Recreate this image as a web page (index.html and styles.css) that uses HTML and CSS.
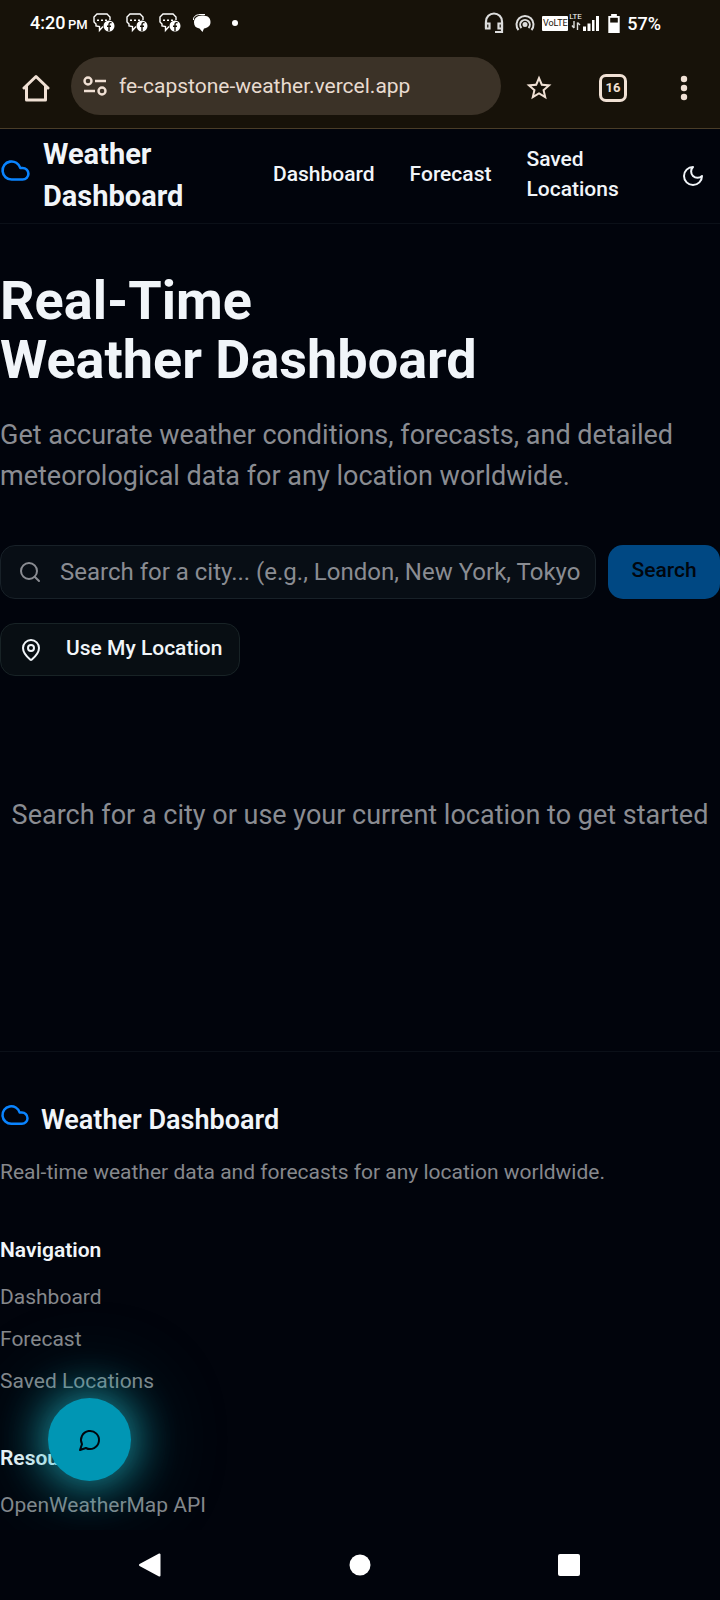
FILE: index.html
```html
<!DOCTYPE html>
<html lang="en">
<head>
<meta charset="utf-8">
<meta name="viewport" content="width=device-width, initial-scale=1">
<title>Weather Dashboard</title>
<link rel="stylesheet" href="styles.css">
</head>
<body>
<div class="browser">
  <div class="status">
    <span class="clock">4:20 <small>PM</small></span>
    <div class="notices">
      <svg class="notice" viewBox="0 0 22 20"><use href="#chat-notice"/></svg>
      <svg class="notice" viewBox="0 0 22 20"><use href="#chat-notice"/></svg>
      <svg class="notice" viewBox="0 0 22 20"><use href="#chat-notice"/></svg>
      <svg class="bubble" viewBox="0 0 20 20"><path d="M1.500 7C1 4 4 1.500 8 1.500h5" fill="none" stroke="#fff" stroke-width="1"/><path d="M10 2.500c5.500 0 8.500 2 8.500 6.500 0 4-3 6-6.500 6.500l-1.500 3.500-3-3.500C4 15 2 13 2 9.500c0-4 3-7 8-7z" fill="#fff"/></svg>
      <span class="dot"></span>
    </div>
    <div class="system">
      <svg class="headset" viewBox="0 0 20 22" fill="none" stroke="#ddd" stroke-width="2.200"><path d="M2 16V9.500a8 8 0 0 1 16 0V20h-7"/><path d="M2 11.500h3.500v5H2zM14.500 11.500H18v5h-3.500z"/></svg>
      <svg class="hotspot" viewBox="0 0 20 18" fill="none" stroke="#ddd" stroke-width="2"><path d="M3.500 16a8.500 8.500 0 1 1 13 0"/><path d="M6.500 14a4.800 4.800 0 1 1 7 0"/><circle cx="10" cy="10.500" r="1.500" fill="#ddd"/></svg>
      <span class="volte">VoLTE</span>
      <div class="signal">
        <span class="lte">LTE</span>
        <svg viewBox="0 0 30 16"><path d="M5 6v7M3 10.500l2 2.500M8.500 15V7.500M8.500 7.500l2.500 2.500" stroke="#ddd" fill="none" stroke-width="1.400"/><path d="M14 11.500h3V16h-3zM18.500 8.500h3V16h-3zM23 5h2.500v11H23zM27 1h3v15h-3z" fill="#fff"/></svg>
      </div>
      <svg class="battery" viewBox="0 0 12 20"><path d="M3 0h6v2h3v18H0V2h3z" fill="#fff"/><path d="M2 4h8v5H2z" fill="#171209"/></svg>
      <span class="percent">57%</span>
    </div>
  </div>
  <div class="toolbar">
    <button class="tool home" aria-label="Home"><svg viewBox="0 0 28 28" fill="none" stroke="#f0e0d4" stroke-width="3" stroke-linejoin="round" stroke-linecap="round"><path d="M2 14 14 2.500 26 14M4.500 12v14h19V12"/></svg></button>
    <label class="address">
      <svg viewBox="0 0 24 20" fill="none" stroke="#f0e0d4" stroke-width="2.400"><circle cx="5" cy="5" r="3.500"/><path d="M12 5h11M1 15h11"/><circle cx="19" cy="15" r="3.500"/></svg>
      <input type="text" aria-label="Address" value="fe-capstone-weather.vercel.app">
    </label>
    <button class="tool star" aria-label="Bookmark"><svg viewBox="0 0 24 24"><path fill="#f0e0d4" d="M22 9.240l-7.190-.620L12 2 9.190 8.630 2 9.240l5.460 4.730L5.820 21 12 17.270 18.180 21l-1.630-7.030L22 9.240zM12 15.400l-3.760 2.270 1-4.280-3.320-2.880 4.380-.380L12 6.100l1.710 4.040 4.380.380-3.320 2.880 1 4.280L12 15.400z"/></svg></button>
    <button class="tool" aria-label="Open tabs"><span class="tabs">16</span></button>
    <button class="tool more" aria-label="Menu"><svg viewBox="0 0 8 26" fill="#f0e0d4"><circle cx="4" cy="4" r="3.200"/><circle cx="4" cy="13" r="3.200"/><circle cx="4" cy="22" r="3.200"/></svg></button>
  </div>
</div>

<div class="page">
  <header class="header">
    <a class="brand" href="#"><svg class="cloud" viewBox="0 0 24 24"><use href="#cloud"/></svg><span>Weather Dashboard</span></a>
    <nav class="nav">
      <a href="#">Dashboard</a>
      <a href="#">Forecast</a>
      <a href="#" class="saved">Saved Locations</a>
    </nav>
    <button class="theme" aria-label="Toggle theme"><svg viewBox="0 0 24 24" fill="none" stroke="currentColor" stroke-width="2" stroke-linecap="round" stroke-linejoin="round"><path d="M12 3a6 6 0 0 0 9 9 9 9 0 1 1-9-9Z"/></svg></button>
  </header>

  <main class="main">
    <h1>Real-Time<br>Weather Dashboard</h1>
    <p class="lead">Get accurate weather conditions, forecasts, and detailed meteorological data for any location worldwide.</p>
    <form class="search">
      <label class="field">
        <svg viewBox="0 0 24 24" fill="none" stroke="currentColor" stroke-width="2" stroke-linecap="round"><circle cx="11" cy="11" r="8"/><path d="m21 21-4.300-4.300"/></svg>
        <input type="text" aria-label="City" placeholder="Search for a city... (e.g., London, New York, Tokyo">
      </label>
      <button type="submit" class="submit" disabled>Search</button>
    </form>
    <button class="locate"><svg viewBox="0 0 24 24" fill="none" stroke="currentColor" stroke-width="2" stroke-linecap="round" stroke-linejoin="round"><path d="M20 10c0 4.993-5.539 10.193-7.399 11.799a1 1 0 0 1-1.202 0C9.539 20.193 4 14.993 4 10a8 8 0 0 1 16 0"/><circle cx="12" cy="10" r="3"/></svg>Use My Location</button>
    <p class="empty">Search for a city or use your current location to get started</p>
  </main>

  <footer class="footer">
    <div class="footer-brand"><svg class="cloud" viewBox="0 0 24 24"><use href="#cloud"/></svg><span>Weather Dashboard</span></div>
    <p class="about">Real-time weather data and forecasts for any location worldwide.</p>
    <section class="links">
      <h2>Navigation</h2>
      <ul>
        <li><a href="#">Dashboard</a></li>
        <li><a href="#">Forecast</a></li>
        <li><a href="#">Saved Locations</a></li>
      </ul>
    </section>
    <section class="links">
      <h2>Resources</h2>
      <ul>
        <li><a href="#">OpenWeatherMap API</a></li>
      </ul>
    </section>
  </footer>
  <button class="chat" aria-label="Open chat"><svg viewBox="0 0 24 24" fill="none" stroke="currentColor" stroke-width="2" stroke-linecap="round" stroke-linejoin="round"><path d="M7.900 20A9 9 0 1 0 4 16.100L2 22Z"/></svg></button>
</div>

<div class="system-nav">
  <button aria-label="Back"><svg viewBox="0 0 24 24"><path d="M21.500 1.500v21L2 12z" fill="#fff" stroke="#fff" stroke-width="2" stroke-linejoin="round"/></svg></button>
  <button aria-label="Home screen"><svg viewBox="0 0 24 24"><circle cx="12" cy="12" r="10.500" fill="#fff"/></svg></button>
  <button aria-label="Recent apps"><svg viewBox="0 0 24 24"><rect x="1" y="1" width="22" height="22" rx="2" fill="#fff"/></svg></button>
</div>

<svg class="defs" aria-hidden="true">
  <symbol id="cloud" viewBox="0 0 24 24"><path d="M17.500 19H9a7 7 0 1 1 6.710-9h1.790a4.500 4.500 0 1 1 0 9Z" fill="none" stroke="#0a84ff" stroke-width="2" stroke-linecap="round" stroke-linejoin="round"/></symbol>
  <symbol id="chat-notice" viewBox="0 0 22 20"><path d="M10 13.500 6.500 17.500v-4L3 13v-2L1 9V4l3-3h10l3 3v3" fill="none" stroke="#fff" stroke-width="1.400"/><path d="M4 6.500h2v1.500H4zM8 6.500h2v1.500H8zM12 6.500h2v1.500h-2z" fill="#fff"/><circle cx="16" cy="13" r="5.500" fill="#fff"/><path d="M18.500 9.800c-2-.5-2.500.5-2.500 2V18M14 13.200h4" fill="none" stroke="#171209" stroke-width="1.400"/></symbol>
</svg>
</body>
</html>
```
FILE: styles.css
```css
* { box-sizing: border-box; }

body {
  margin: 0;
  min-height: 100vh;
  display: flex;
  flex-direction: column;
  background: #01040c;
  color: #f1f5f9;
  font-family: Roboto, "Liberation Sans", sans-serif;
  font-size: 21px;
  line-height: 30px;
}

svg { display: block; flex: none; }
a { color: inherit; text-decoration: none; }
button, input { font: inherit; color: inherit; }
button { border: 0; padding: 0; background: none; }
.defs { display: none; }

/* Browser chrome */
.browser { background: #171209; border-bottom: 1px solid #4a3d28; color: #fff; }
.status { display: flex; align-items: center; height: 44px; padding: 2px 59px 0 30px; }
.clock { padding-top: 2px; font-size: 18px; font-weight: 500; white-space: nowrap; }
.clock small { font-size: 13px; margin-left: -2px; }
.notices { display: flex; align-items: center; gap: 11px; margin-left: 5px; }
.notice { width: 22px; height: 20px; }
.bubble { width: 20px; height: 20px; }
.dot { width: 6px; height: 6px; margin-left: 9px; border-radius: 50%; background: #fff; }
.system { display: flex; align-items: center; margin-left: auto; }
.headset { width: 20px; height: 22px; margin-right: 11px; }
.hotspot { width: 20px; height: 18px; margin-right: 7px; }
.volte { width: 26px; border-radius: 1px; background: #fff; color: #171209; font-size: 9px; font-weight: 400; line-height: 15px; text-align: center; }
.signal { position: relative; width: 30px; margin: 0 9px 0 1px; }
.signal svg { width: 30px; height: 16px; }
.lte { position: absolute; left: 0; top: -2px; font-size: 8px; line-height: 8px; }
.battery { width: 12px; height: 19px; margin-right: 7px; }
.percent { padding-top: 2px; font-size: 18px; font-weight: 500; }

.toolbar { display: flex; align-items: center; height: 84px; padding: 0 20px 0 18px; }
.tool { display: grid; place-items: center; width: 38px; height: 48px; margin-left: 19px; }
.tool + .tool { margin-left: 36px; }
.tool svg { width: 30px; height: 30px; }
.toolbar .star svg { margin-top: 4px; }
.home { width: 36px; margin-left: 0; }
.toolbar .home svg { width: 28px; height: 28px; margin-top: 4px; }
.toolbar .more { width: 32px; margin-left: 36px; }
.toolbar .more svg { width: 8px; height: 26px; margin-top: 4px; }
.address { flex: 1; display: flex; align-items: center; gap: 12px; height: 58px; margin-left: 17px; padding: 0 12px; border-radius: 29px; background: #3b3227; color: #e8dbd0; }
.address svg { width: 24px; height: 20px; }
.address input { flex: 1; min-width: 0; padding: 0; border: 0; background: none; font-size: 21px; outline: 0; }
.tabs { display: grid; place-items: center; width: 28px; height: 28px; margin-top: 4px; border: 3px solid #f0e0d4; border-radius: 7px; color: #f0e0d4; font-size: 13px; font-weight: 700; line-height: 20px; }

/* Page */
.page { position: relative; flex: 1; display: flex; flex-direction: column; overflow: hidden; }
.header { display: flex; align-items: center; padding: 4px 15px 6px 0; border-bottom: 1px solid #0b1018; }
.brand { display: flex; align-items: center; gap: 12px; width: 208px; font-size: 29px; font-weight: 700; line-height: 42px; }
.brand .cloud { width: 31px; height: 31px; margin-bottom: 10px; }
.nav { display: flex; align-items: center; gap: 35px; margin-left: 65px; padding-bottom: 2px; font-weight: 500; }
.saved { width: 96px; }
.theme { margin-left: auto; }
.theme svg { width: 24px; height: 24px; margin-top: 2px; }

.main { padding-top: 47px; }
h1 { margin: 0; font-size: 54px; line-height: 59px; font-weight: 700; }
.lead { margin: 26px 0 0; color: #8a8c92; font-size: 27px; line-height: 41px; }
.search { display: flex; gap: 12px; margin-top: 48px; }
.field { flex: 1; display: flex; align-items: center; gap: 18px; min-width: 0; height: 54px; padding: 0 8px 0 17px; border: 1px solid #182128; border-radius: 15px; background: #080e15; color: #8a8c92; }
.field svg { width: 24px; height: 24px; }
.field input { flex: 1; min-width: 0; padding: 0; border: 0; background: none; font-size: 24px; outline: 0; }
.field input::placeholder { color: #8a8c92; opacity: 1; }
.submit { width: 112px; padding-bottom: 4px; border-radius: 15px; background: #004883; color: #01060d; font-weight: 500; }
.locate { display: flex; align-items: center; gap: 23px; height: 53px; margin-top: 24px; padding: 0 17px 3px 18px; border: 1px solid #182326; border-radius: 15px; background: #080e13; font-weight: 500; }
.locate svg { width: 24px; height: 24px; margin-top: 4px; }
.empty { margin: 0; padding: 119px 0 215px; text-align: center; color: #8a8c92; font-size: 27px; line-height: 41px; }

.footer { padding-top: 48px; border-top: 1px solid #0b1018; }
.footer-brand { display: flex; align-items: center; gap: 11px; font-size: 27px; font-weight: 600; line-height: 40px; }
.footer-brand .cloud { width: 30px; height: 30px; margin-bottom: 10px; }
.about { margin: 17px 0 0; color: #86888c; }
.links { margin-top: 47px; }
.about + .links { margin-top: 48px; }
.links h2 { margin: 0 0 17px; font-size: 21px; font-weight: 600; line-height: 30px; }
.links ul { display: grid; gap: 12px; margin: 0; padding: 0; list-style: none; color: #86888c; }

.chat { position: absolute; left: 48px; bottom: 49px; display: grid; place-items: center; width: 83px; height: 83px; border-radius: 50%; background: #0096b4; color: #01060d; box-shadow: 0 0 45px 3px rgba(34, 195, 215, .75), 0 0 90px 12px rgba(20, 150, 150, .28); }
.chat svg { width: 24px; height: 24px; }

/* System navigation */
.system-nav { display: flex; justify-content: space-between; align-items: center; height: 70px; padding: 0 139px 0 138px; background: #01040c; }
.system-nav svg { width: 24px; height: 24px; }
```
